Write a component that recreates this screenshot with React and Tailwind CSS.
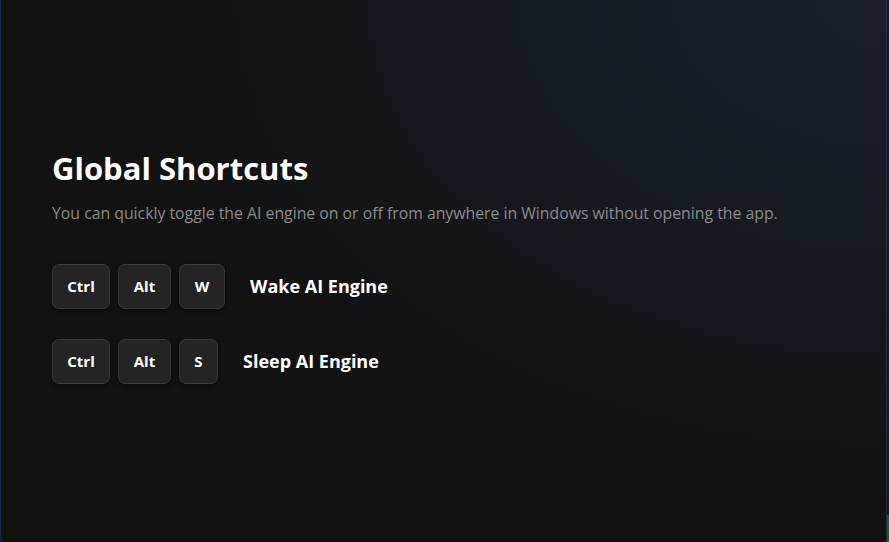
function Key({ label, width }) {
    return (
        <div
            className={`${width} h-[45px] flex items-center justify-center rounded-[7px] bg-[#242424] border border-[#3a3a3a] shadow-[0_2px_4px_rgba(0,0,0,0.5)] text-white text-[15px] font-bold`}
        >
            {label}
        </div>
    );
}

function ShortcutRow({ keys, label, labelGap }) {
    return (
        <div className="flex items-center">
            <div className="flex gap-2">
                {keys.map((k) => (
                    <Key key={k.label} label={k.label} width={k.width} />
                ))}
            </div>
            <span className={`${labelGap} text-white text-[18px] font-bold`}>
                {label}
            </span>
        </div>
    );
}

export default function App() {
    return (
        <div
            className="w-[889px] h-[542px] flex overflow-hidden bg-[#121212]"
            style={{ fontFamily: '"Open Sans", "Noto Sans", sans-serif' }}
        >
            <div className="w-px h-full bg-[#1c2450]"></div>

            <div className="flex-1 h-full flex flex-col justify-center pl-[51px] pb-[11px] bg-[radial-gradient(ellipse_85%_95%_at_100%_0%,#1a1f29_0%,#161a21_45%,#121212_100%)]">
                <h1 className="text-[31px] font-bold text-white leading-[40px]">
                    Global Shortcuts
                </h1>

                <p className="mt-[13px] text-[15.8px] leading-[24px] text-[#8c8c8c]">
                    You can quickly toggle the AI engine on or off from anywhere in Windows without opening the app.
                </p>

                <div className="mt-[39px] flex flex-col gap-[30px]">
                    <ShortcutRow
                        keys={[
                            { label: "Ctrl", width: "w-[58px]" },
                            { label: "Alt", width: "w-[53px]" },
                            { label: "W", width: "w-[46px]" },
                        ]}
                        label="Wake AI Engine"
                        labelGap="ml-[25px]"
                    />
                    <ShortcutRow
                        keys={[
                            { label: "Ctrl", width: "w-[58px]" },
                            { label: "Alt", width: "w-[53px]" },
                            { label: "S", width: "w-[39px]" },
                        ]}
                        label="Sleep AI Engine"
                        labelGap="ml-[25px]"
                    />
                </div>
            </div>

            <div className="w-px h-full bg-[#2a2d33]"></div>
            <div className="w-[2px] h-full flex flex-col bg-[#0a1640]">
                <div className="flex-1"></div>
                <div className="h-[27px] bg-[#0f5a48]"></div>
            </div>
        </div>
    );
}
